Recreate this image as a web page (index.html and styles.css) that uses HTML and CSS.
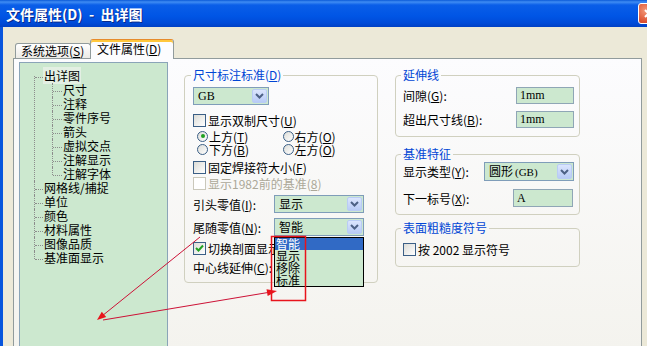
FILE: index.html
```html
<!DOCTYPE html>
<html lang="zh-CN">
<head>
    <meta charset="UTF-8">
    <title>文件属性(D) - 出详图</title>
    <link rel="stylesheet" href="styles.css">
</head>
<body>

<div class="window">
    <div class="titlebar">
        <span class="title">文件属性(D)  -  出详图</span>
        <span class="close-btn">
            <svg width="11" height="11" viewBox="0 0 11 11"><path d="M2 2 L9 9 M9 2 L2 9" stroke="#fff" stroke-width="2" fill="none"/></svg>
        </span>
    </div>

    <div class="client">
        <div class="tabs">
            <div class="tab tab-sys">系统选项(<u>S</u>)</div>
            <div class="tab tab-file active">文件属性(<u>D</u>)</div>
        </div>

        <div class="panel">
            <!-- left tree -->
            <div class="tree">
                <ul class="tree-root">
                    <li><span class="node selected">出详图</span>
                        <ul class="tree-sub">
                            <li>尺寸</li>
                            <li>注释</li>
                            <li>零件序号</li>
                            <li>箭头</li>
                            <li>虚拟交点</li>
                            <li>注解显示</li>
                            <li>注解字体</li>
                        </ul>
                    </li>
                    <li>网格线/捕捉</li>
                    <li>单位</li>
                    <li>颜色</li>
                    <li>材料属性</li>
                    <li>图像品质</li>
                    <li>基准面显示</li>
                </ul>
            </div>

            <!-- dimension standard -->
            <fieldset class="group group-dim">
                <legend>尺寸标注标准(<u>D</u>)</legend>
                <div class="combo combo-std">
                    <span class="combo-text serif">GB</span>
                    <span class="combo-btn"><svg width="9" height="6" viewBox="0 0 9 6"><path d="M1 1 L4.5 4.5 L8 1" stroke="#4d6185" stroke-width="2" fill="none"/></svg></span>
                </div>
                <div class="check row-dual"><span class="box"></span>显示双制尺寸(<u>U</u>)</div>
                <div class="radio-row row-r1">
                    <span class="radio"><span class="dot on"></span>上方(<u>T</u>)</span>
                    <span class="radio"><span class="dot"></span>右方(<u>O</u>)</span>
                </div>
                <div class="radio-row row-r2">
                    <span class="radio"><span class="dot"></span>下方(<u>B</u>)</span>
                    <span class="radio"><span class="dot"></span>左方(<u>O</u>)</span>
                </div>
                <div class="check row-weld"><span class="box"></span>固定焊接符大小(<u>F</u>)</div>
                <div class="check disabled"><span class="box"></span>显示1982前的基准(<u>8</u>)</div>
                <div class="field-row row-lead">
                    <span class="lbl lbl-81">引头零值(<u>I</u>):</span>
                    <div class="combo combo-90">
                        <span class="combo-text">显示</span>
                        <span class="combo-btn"><svg width="9" height="6" viewBox="0 0 9 6"><path d="M1 1 L4.5 4.5 L8 1" stroke="#4d6185" stroke-width="2" fill="none"/></svg></span>
                    </div>
                </div>
                <div class="field-row row-trail">
                    <span class="lbl lbl-81">尾随零值(<u>N</u>):</span>
                    <div class="combo-wrap">
                        <div class="combo combo-90">
                            <span class="combo-text">智能</span>
                            <span class="combo-btn"><svg width="9" height="6" viewBox="0 0 9 6"><path d="M1 1 L4.5 4.5 L8 1" stroke="#4d6185" stroke-width="2" fill="none"/></svg></span>
                        </div>
                        <ul class="dropdown">
                            <li class="hl">智能</li>
                            <li>显示</li>
                            <li>移除</li>
                            <li>标准</li>
                        </ul>
                    </div>
                </div>
                <div class="check row-sect"><span class="box checked"><svg width="11" height="11" viewBox="0 0 11 11"><path d="M2 5 L4.5 7.5 L9 2.5" stroke="#21a121" stroke-width="2" fill="none"/></svg></span><span class="clip-text">切换剖面显示</span></div>
                <div class="field-row row-center">
                    <span class="lbl lbl-81">中心线延伸(<u>C</u>):</span>
                </div>
            </fieldset>

            <div class="col-right">
                <fieldset class="group group-ext">
                    <legend>延伸线</legend>
                    <div class="field-row row-gap">
                        <span class="lbl lbl-113">间隙(<u>G</u>):</span>
                        <span class="input serif">1mm</span>
                    </div>
                    <div class="field-row row-over">
                        <span class="lbl lbl-113">超出尺寸线(<u>B</u>):</span>
                        <span class="input serif">1mm</span>
                    </div>
                </fieldset>

                <fieldset class="group group-datum">
                    <legend>基准特征</legend>
                    <div class="field-row row-type">
                        <span class="lbl lbl-81">显示类型(<u>Y</u>):</span>
                        <div class="combo combo-90 combo-tall">
                            <span class="combo-text">圆形<span class="serif small">(GB)</span></span>
                            <span class="combo-btn"><svg width="9" height="6" viewBox="0 0 9 6"><path d="M1 1 L4.5 4.5 L8 1" stroke="#4d6185" stroke-width="2" fill="none"/></svg></span>
                        </div>
                    </div>
                    <div class="field-row row-next">
                        <span class="lbl lbl-110">下一标号(<u>X</u>):</span>
                        <span class="input input-tall serif">A</span>
                    </div>
                </fieldset>

                <fieldset class="group group-rough">
                    <legend>表面粗糙度符号</legend>
                    <div class="check row-2002"><span class="box"></span>按 2002 显示符号</div>
                </fieldset>
            </div>
        </div>
    </div>
</div>

<!-- red annotations drawn over the dialog -->
<svg class="annotations" width="647" height="346" viewBox="0 0 647 346">
    <rect x="271.5" y="236.5" width="34" height="64" fill="none" stroke="#e8141c" stroke-width="1.5"/>
    <line x1="200" y1="237" x2="102" y2="316" stroke="#cc1136" stroke-width="1"/>
    <polygon points="97,320 106.2,317.1 101.8,311.7" fill="#e8141c"/>
    <line x1="103" y1="320" x2="268" y2="292.5" stroke="#cc1136" stroke-width="1"/>
    <polygon points="277,291 267.7,296.1 266.5,289.2" fill="#e8141c"/>
</svg>

</body>
</html>
```

FILE: styles.css
```css
* {
    box-sizing: border-box;
}
body {
    margin: 0;
    width: 647px;
    height: 346px;
    overflow: hidden;
    position: relative;
    background: #ece9d8;
    font-family: "Noto Sans CJK SC", "Liberation Sans", sans-serif;
    font-size: 12px;
    color: #000;
}
u {
    text-decoration: underline;
}
.serif {
    font-family: "Liberation Serif", "Noto Sans CJK SC", serif;
}
.small {
    font-size: 11px;
    padding-left: 2px;
}

/* window frame */
.window {
    width: 647px;
    height: 346px;
    overflow: hidden;
}
.titlebar {
    display: flex;
    align-items: center;
    height: 27px;
    padding-left: 6px;
    background: linear-gradient(to bottom, #0b5ad8 0, #3f8cf3 2px, #0a5ee8 5px, #0055e5 16px, #004bd8 23px, #0040c4 27px);
}
.title {
    color: #fff;
    font-weight: bold;
    font-size: 14px;
    line-height: 16px;
    white-space: pre;
    text-shadow: 1px 1px 0 #0a2a8a;
}
.close-btn {
    display: flex;
    align-items: center;
    justify-content: center;
    margin-left: auto;
    margin-right: -12px;
    width: 21px;
    height: 21px;
    border: 1px solid #fff;
    border-radius: 3px;
    background: radial-gradient(circle at 35% 35%, #f29878, #dc5030 65%, #c2381e);
}
.client {
    display: flex;
    flex-direction: column;
    height: 319px;
    border-left: 3px solid #0855dd;
    padding: 12px 0 0 10px;
}

/* tabs */
.tabs {
    display: flex;
    align-items: flex-end;
    height: 20px;
    margin: 0 0 -1px 2px;
    position: relative;
    z-index: 1;
}
.tab {
    height: 15px;
    margin-bottom: 1px;
    padding-left: 5px;
    border: 1px solid #919b9c;
    border-bottom: none;
    border-radius: 3px 3px 0 0;
    background: linear-gradient(#ffffff, #ecebe6);
    line-height: 13px;
    white-space: nowrap;
}
.tab-sys {
    width: 76px;
}
.tab-file {
    width: 84px;
    margin-left: -1px;
}
.tab.active {
    height: 20px;
    margin-bottom: 0;
    padding-top: 2px;
    padding-left: 6px;
    line-height: 14px;
    background: #fcfcfe;
    border-top: 1px solid #e68b2c;
    box-shadow: inset 0 2px 0 #ffc73c;
}

/* tab page */
.panel {
    display: flex;
    align-items: flex-start;
    width: 629px;
    height: 292px;
    padding: 3px 0 0 5px;
    border: 1px solid #919b9c;
    background: linear-gradient(#fcfcfe, #f4f3ee);
}

/* tree */
.tree {
    flex: none;
    width: 149px;
    height: 292px;
    padding-top: 6px;
    border: 1px solid #8aa4b8;
    background: #cce8cf;
}
.tree ul {
    list-style: none;
    margin: 0;
    padding: 0;
}
.tree .tree-root {
    margin-left: 14px;
}
.tree .tree-sub {
    margin-left: 8px;
}
.tree li {
    position: relative;
    padding-left: 10px;
    line-height: 14px;
    white-space: nowrap;
}
.tree .tree-sub li {
    padding-left: 11px;
}
.tree li::before {
    content: "";
    position: absolute;
    left: 0;
    top: 0;
    bottom: 0;
    border-left: 1px dotted #8c8c8c;
}
.tree .tree-root > li:first-child::before {
    top: 7px;
}
.tree li:last-child::before {
    bottom: auto;
    height: 8px;
}
.tree li::after {
    content: "";
    position: absolute;
    left: 1px;
    top: 8px;
    width: 8px;
    border-top: 1px dotted #8c8c8c;
}
.tree .tree-sub li::after {
    width: 9px;
}
.node.selected {
    margin-left: -1px;
    padding: 0 1px;
    background: #e3efe3;
}

/* group boxes */
.group {
    margin: 6px 0 0 0;
    padding: 0 5px 0 8px;
    border: 1px solid #d0d0bf;
    border-radius: 4px;
    min-width: 0;
}
.group legend {
    margin-left: -2px;
    padding: 0 2px;
    color: #0046d5;
    line-height: 14px;
}
.group-dim {
    flex: none;
    width: 194px;
    margin-left: 16px;
    padding-bottom: 7px;
}
.col-right {
    flex: none;
    width: 185px;
    margin-left: 17px;
}
.col-right .group {
    padding-left: 7px;
}
.group-ext {
    padding-bottom: 8px;
}
.group-datum {
    margin-top: 10px;
    padding-bottom: 7px;
}
.group-rough {
    padding-bottom: 9px;
}

/* controls */
.combo {
    display: flex;
    align-items: center;
    height: 18px;
    padding: 1px;
    border: 1px solid #7f9db9;
    background: #cce8cf;
}
.combo-std {
    width: 76px;
    margin-top: 5px;
}
.combo-90 {
    width: 90px;
}
.combo-tall {
    height: 19px;
}
.combo-text {
    flex: 1;
    padding-left: 3px;
    line-height: 14px;
    white-space: nowrap;
}
.combo-btn {
    display: flex;
    align-items: center;
    justify-content: center;
    width: 15px;
    height: 100%;
    border: 1px solid #b9ccf5;
    border-radius: 2px;
    background: linear-gradient(#dbe5fd, #b8cbf6);
}
.combo-wrap {
    position: relative;
}
.dropdown {
    position: absolute;
    top: 100%;
    left: 0;
    z-index: 2;
    width: 90px;
    margin: 1px 0 0 0;
    padding: 0;
    list-style: none;
    border: 1px solid #000;
    background: #cce8cf;
}
.dropdown li {
    height: 12px;
    padding-left: 1px;
    line-height: 12px;
}
.dropdown li.hl {
    background: #316ac5;
    color: #fff;
}
.input {
    display: flex;
    align-items: center;
    width: 60px;
    height: 17px;
    padding-left: 3px;
    border: 1px solid #8fa6b6;
    background: #cce8cf;
}
.input-tall {
    height: 18px;
}

.check {
    display: flex;
    align-items: center;
    height: 16px;
    white-space: nowrap;
}
.clip-text {
    width: 66px;
    overflow: hidden;
}
.box {
    flex: none;
    display: flex;
    align-items: center;
    justify-content: center;
    width: 13px;
    height: 13px;
    margin-right: 2px;
    border: 1px solid #3b5f86;
    background: linear-gradient(135deg, #dcdcd7, #ffffff);
}
.check.disabled {
    color: #aca899;
}
.check.disabled .box {
    border-color: #cac8bb;
    background: #fff;
}
.radio-row {
    display: flex;
    align-items: center;
}
.radio {
    display: flex;
    align-items: center;
    width: 94px;
    padding-left: 4px;
    white-space: nowrap;
}
.radio + .radio {
    padding-left: 0;
}
.dot {
    flex: none;
    display: flex;
    align-items: center;
    justify-content: center;
    width: 11px;
    height: 11px;
    margin-right: 1px;
    border: 1px solid #3b5f86;
    border-radius: 50%;
    background: linear-gradient(135deg, #dcdcd7, #ffffff);
}
.dot.on::after {
    content: "";
    width: 4px;
    height: 4px;
    border-radius: 50%;
    background: #21a121;
}
.field-row {
    display: flex;
    align-items: center;
    white-space: nowrap;
}
.lbl {
    flex: none;
}
.lbl-81 {
    width: 81px;
}
.lbl-110 {
    width: 110px;
}
.lbl-113 {
    width: 113px;
}

/* vertical rhythm of the rows */
.row-dual {
    margin-top: 7px;
}
.row-r1 {
    height: 14px;
    margin-top: 1px;
}
.row-r2 {
    height: 13px;
}
.row-weld {
    margin-top: 3px;
}
.row-lead {
    margin-top: 4px;
}
.row-trail {
    margin-top: 5px;
}
.row-sect {
    margin-top: 4px;
}
.row-center {
    height: 16px;
    margin-top: 3px;
}
.row-gap {
    margin-top: 5px;
}
.row-over {
    margin-top: 7px;
}
.row-type {
    margin-top: 1px;
}
.row-next {
    margin-top: 8px;
}
.row-2002 {
    margin-top: 6px;
}

.annotations {
    position: absolute;
    top: 0;
    left: 0;
    z-index: 5;
    pointer-events: none;
}
```
